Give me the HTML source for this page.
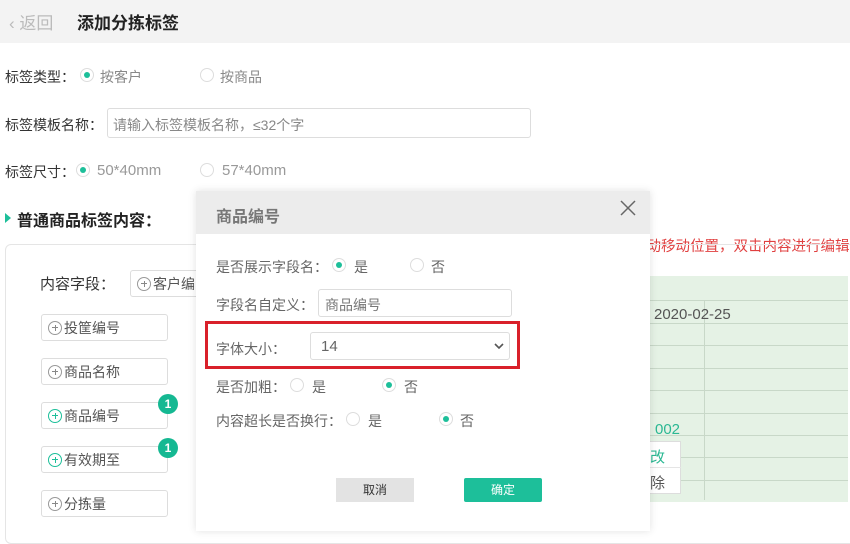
<!DOCTYPE html>
<html><head><meta charset="utf-8"><style>
*{margin:0;padding:0;box-sizing:border-box}
body{width:850px;height:520px;overflow:hidden;background:#fff;font-family:"Liberation Sans","Noto Sans CJK SC",sans-serif;font-size:14px;color:#333;position:relative}
.a{position:absolute;white-space:nowrap}
.rd{position:absolute;width:14px;height:14px;border:1px solid #ddd;border-radius:50%;background:#fff}
.rd.on::after{content:"";position:absolute;left:3px;top:3px;width:6px;height:6px;border-radius:50%;background:#1dbf9a}
.btn{position:absolute;height:27px;border:1px solid #ddd;border-radius:3px;background:#fff;color:#555;font-size:14px;padding-left:6px;display:flex;align-items:center}
.pl{display:inline-block;width:14px;height:14px;border:1px solid #999;border-radius:50%;position:relative;margin-right:2px}
.pl::before{content:"";position:absolute;left:3px;top:5.5px;width:6px;height:1px;background:#888}
.pl::after{content:"";position:absolute;left:5.5px;top:3px;width:1px;height:6px;background:#888}
.pl.g{border-color:#1dbf9a}.pl.g::before,.pl.g::after{background:#1dbf9a}
.bd{position:absolute;width:20px;height:20px;border-radius:50%;background:#15b892;color:#fff;font-size:12px;font-weight:bold;text-align:center;line-height:20px}
.hl{position:absolute;left:600px;width:248px;height:1px;background:#c8d8c8}
</style></head><body>
<div class="a" style="left:0;top:0;width:850px;height:43px;background:#f3f3f3"></div>
<div class="a" style="left:9px;top:9px;font-size:17px;color:#bbb">‹ 返回</div>
<div class="a" style="left:77px;top:9px;font-size:17px;font-weight:bold;color:#222">添加分拣标签</div>

<div class="a" style="left:5px;top:67px">标签类型：</div>
<div class="rd on" style="left:80px;top:68px"></div><div class="a" style="left:100px;top:67px;color:#888">按客户</div>
<div class="rd" style="left:200px;top:68px"></div><div class="a" style="left:220px;top:67px;color:#888">按商品</div>

<div class="a" style="left:5px;top:115px">标签模板名称：</div>
<div class="a" style="left:107px;top:108px;width:424px;height:30px;border:1px solid #ddd;border-radius:3px;padding:6px 5px;color:#888">请输入标签模板名称，≤32个字</div>

<div class="a" style="left:5px;top:162px">标签尺寸：</div>
<div class="rd on" style="left:76px;top:163px"></div><div class="a" style="left:97px;top:162px;color:#999;font-size:15px">50*40mm</div>
<div class="rd" style="left:200px;top:163px"></div><div class="a" style="left:222px;top:162px;color:#999;font-size:15px">57*40mm</div>

<div class="a" style="left:5px;top:213px;width:0;height:0;border-left:6px solid #1dbf9a;border-top:5px solid transparent;border-bottom:5px solid transparent"></div>
<div class="a" style="left:17px;top:207px;font-size:16px;font-weight:bold;color:#222">普通商品标签内容：</div>
<div class="a" style="left:632px;top:235px;color:#e04040;font-size:14.5px">拖动移动位置，双击内容进行编辑</div>

<div class="a" style="left:5px;top:244px;width:860px;height:300px;border:1px solid #e5e5e5;border-radius:6px"></div>
<div class="a" style="left:40px;top:273px;font-size:15px">内容字段：</div>
<div class="btn" style="left:130px;top:270px;width:80px"><span class="pl"></span>客户编</div>
<div class="btn" style="left:41px;top:314px;width:127px"><span class="pl"></span>投筐编号</div>
<div class="btn" style="left:41px;top:358px;width:127px"><span class="pl"></span>商品名称</div>
<div class="btn" style="left:41px;top:402px;width:127px"><span class="pl g"></span>商品编号</div>
<div class="btn" style="left:41px;top:446px;width:127px"><span class="pl g"></span>有效期至</div>
<div class="btn" style="left:41px;top:490px;width:127px"><span class="pl"></span>分拣量</div>
<div class="bd" style="left:158px;top:394px">1</div>
<div class="bd" style="left:158px;top:438px">1</div>

<div class="a" style="left:600px;top:276px;width:248px;height:226px;background:#e5f2e5"></div>
<div class="hl" style="top:300px"></div><div class="hl" style="top:323px"></div><div class="hl" style="top:345px"></div><div class="hl" style="top:368px"></div><div class="hl" style="top:390px"></div><div class="hl" style="top:413px"></div><div class="hl" style="top:435px"></div><div class="hl" style="top:457px"></div><div class="hl" style="top:480px"></div>
<div class="a" style="left:704px;top:300px;width:1px;height:200px;background:#c8d8c8"></div>
<div class="a" style="left:654px;top:306px;color:#555;font-size:15px">2020-02-25</div>
<div class="a" style="left:655px;top:421px;color:#2bb893;font-size:15px">002</div>
<div class="a" style="left:600px;top:441px;width:81px;height:53px;background:#fff;border:1px solid #ddd"></div>
<div class="a" style="left:600px;top:467px;width:81px;height:1px;background:#e5e5e5"></div>
<div class="a" style="left:650px;top:446px;color:#2bb893;font-size:15px">改</div>
<div class="a" style="left:650px;top:472px;color:#555;font-size:15px">除</div>

<div class="a" style="left:196px;top:191px;width:454px;height:340px;background:#fff;box-shadow:0 0 8px rgba(0,0,0,.12)"></div>
<div class="a" style="left:196px;top:191px;width:454px;height:43px;background:#ececec"></div>
<div class="a" style="left:216px;top:203px;font-size:16px;font-weight:bold;color:#777">商品编号</div>
<svg class="a" style="left:620px;top:200px" width="16" height="16"><path d="M1 1L15 15M15 1L1 15" stroke="#666" stroke-width="1.5"/></svg>

<div class="a" style="left:216px;top:257px;color:#666">是否展示字段名：</div>
<div class="rd on" style="left:332px;top:258px"></div><div class="a" style="left:354px;top:257px;color:#666">是</div>
<div class="rd" style="left:410px;top:258px"></div><div class="a" style="left:431px;top:257px;color:#666">否</div>

<div class="a" style="left:216px;top:295px;color:#666">字段名自定义：</div>
<div class="a" style="left:318px;top:289px;width:194px;height:28px;border:1px solid #ddd;border-radius:3px;padding:5px 6px;color:#777">商品编号</div>

<div class="a" style="left:205px;top:321px;width:315px;height:48px;border:3px solid #d9202a"></div>
<div class="a" style="left:216px;top:339px;color:#666">字体大小：</div>
<div class="a" style="left:310px;top:332px;width:200px;height:28px;border:1px solid #ddd;border-radius:3px;padding:5px 10px;color:#666;font-size:15px">14</div>
<svg class="a" style="left:494px;top:342px" width="10" height="8"><path d="M1 2L5 6L9 2" stroke="#555" stroke-width="1.6" fill="none"/></svg>

<div class="a" style="left:216px;top:377px;color:#666">是否加粗：</div>
<div class="rd" style="left:290px;top:378px"></div><div class="a" style="left:312px;top:377px;color:#666">是</div>
<div class="rd on" style="left:382px;top:378px"></div><div class="a" style="left:404px;top:377px;color:#666">否</div>

<div class="a" style="left:216px;top:411px;color:#666">内容超长是否换行：</div>
<div class="rd" style="left:346px;top:412px"></div><div class="a" style="left:368px;top:411px;color:#666">是</div>
<div class="rd on" style="left:439px;top:412px"></div><div class="a" style="left:460px;top:411px;color:#666">否</div>

<div class="a" style="left:336px;top:478px;width:78px;height:24px;background:#e3e3e3;color:#333;font-size:12px;text-align:center;line-height:24px">取消</div>
<div class="a" style="left:464px;top:478px;width:78px;height:24px;background:#1dbf9a;color:#fff;font-size:12px;text-align:center;line-height:24px;border-radius:2px">确定</div>
</body></html>
